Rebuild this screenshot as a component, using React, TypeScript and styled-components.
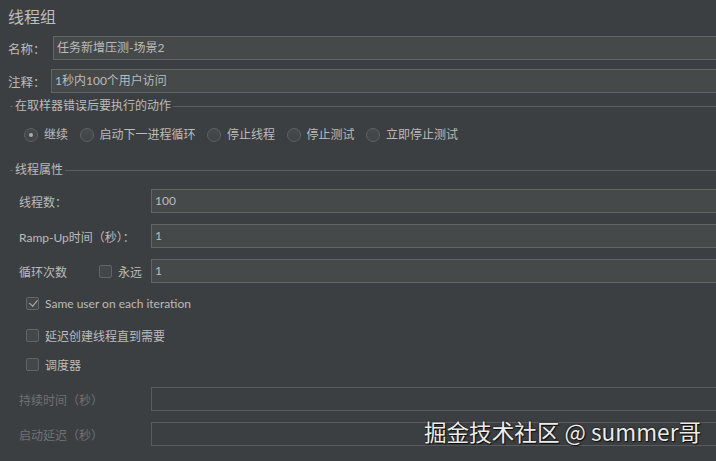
import React from 'react';
import styled, { createGlobalStyle } from 'styled-components';

const GlobalStyle = createGlobalStyle`
  html, body {
    margin: 0;
    padding: 0;
    background: #3c3f41;
    overflow: hidden;
  }
  body {
    width: 716px;
    height: 461px;
    font-family: Lato, "Noto Sans CJK SC", sans-serif;
    font-size: 12px;
    color: #bbbbbb;
  }
`;

const radios = ['继续', '启动下一进程循环', '停止线程', '停止测试', '立即停止测试'];

const App = () => {
  return (
    <>
      <GlobalStyle />
      <Page>
        <Title>线程组</Title>
        <TopRow>
          <TopLabel>名称：</TopLabel>
          <Field value="任务新增压测-场景2" />
        </TopRow>
        <TopRow $gap={9}>
          <TopLabel $width={43}>注释：</TopLabel>
          <Field value="1秒内100个用户访问" />
        </TopRow>

        <GroupHeader $top={5}>
          <Dash />
          <GroupTitle>在取样器错误后要执行的动作</GroupTitle>
          <Rule />
        </GroupHeader>
        <RadioRow>
          {radios.map((label, i) => (
            <RadioItem key={label}>
              <Radio $checked={i === 0} />
              <span>{label}</span>
            </RadioItem>
          ))}
        </RadioRow>

        <GroupHeader $top={19}>
          <Dash />
          <GroupTitle>线程属性</GroupTitle>
          <Rule />
        </GroupHeader>
        <PropRow $gap={11}>
          <PropLabel>线程数：</PropLabel>
          <Field value="100" />
        </PropRow>
        <PropRow $gap={11}>
          <PropLabel>Ramp-Up时间（秒）：</PropLabel>
          <Field value="1" />
        </PropRow>
        <PropRow $gap={11}>
          <PropLabel>
            <LoopLabel>循环次数</LoopLabel>
            <Box />
            <ForeverText>永远</ForeverText>
          </PropLabel>
          <Field value="1" />
        </PropRow>

        <CheckRow $gap={10}>
          <Box $checked />
          <span>Same user on each iteration</span>
        </CheckRow>
        <CheckRow $gap={12}>
          <Box />
          <span>延迟创建线程直到需要</span>
        </CheckRow>
        <CheckRow $gap={9}>
          <Box />
          <span>调度器</span>
        </CheckRow>

        <PropRow $gap={13}>
          <PropLabel $disabled>持续时间（秒）</PropLabel>
          <Field $disabled />
        </PropRow>
        <PropRow $gap={11}>
          <PropLabel $disabled>启动延迟（秒）</PropLabel>
          <Field $disabled />
        </PropRow>

        <Watermark>掘金技术社区 @ summer哥</Watermark>
      </Page>
    </>
  );
};

export default App;

const Field = ({ value, $disabled }: { value?: string; $disabled?: boolean }) => (
  <Input $disabled={$disabled}>{value}</Input>
);

const Page = styled.div`
  position: relative;
  width: 716px;
  height: 461px;
  overflow: hidden;
  display: flex;
  flex-direction: column;
`;

const Title = styled.div`
  height: 36px;
  padding: 6px 0 0 8px;
  box-sizing: border-box;
  font-size: 16px;
  line-height: 22px;
  color: #bdbdbd;
`;

const TopRow = styled.div<{ $gap?: number }>`
  display: flex;
  align-items: center;
  height: 24px;
  margin-top: ${(p) => p.$gap ?? 0}px;
  padding-left: 8px;
  margin-right: -6px;
`;

const TopLabel = styled.div<{ $width?: number }>`
  width: ${(p) => p.$width ?? 45}px;
  flex-shrink: 0;
  font-size: 12.5px;
`;

const Input = styled.div<{ $disabled?: boolean }>`
  flex: 1;
  height: 24px;
  box-sizing: border-box;
  border: 1px solid ${(p) => (p.$disabled ? '#595b5c' : '#646464')};
  background: ${(p) => (p.$disabled ? '#3c3f41' : '#45494a')};
  padding-left: 3px;
  line-height: 22px;
  font-size: 12px;
  color: #bbbbbb;
  white-space: nowrap;
`;

const GroupHeader = styled.div<{ $top: number }>`
  display: flex;
  align-items: center;
  height: 16px;
  margin-top: ${(p) => p.$top}px;
  padding-left: 10px;
`;

const Dash = styled.div`
  width: 3px;
  height: 1px;
  background: #5b5d5e;
`;

const GroupTitle = styled.span`
  padding: 0 2px;
  font-size: 12px;
  line-height: 16px;
`;

const Rule = styled.div`
  flex: 1;
  height: 1px;
  background: #5b5d5e;
`;

const RadioRow = styled.div`
  display: flex;
  align-items: center;
  gap: 11.5px;
  height: 16px;
  margin-top: 13px;
  padding-left: 24px;
`;

const RadioItem = styled.label`
  display: flex;
  align-items: center;
  gap: 6px;
  line-height: 16px;
`;

const Radio = styled.span<{ $checked?: boolean }>`
  position: relative;
  width: 14px;
  height: 14px;
  box-sizing: border-box;
  border-radius: 50%;
  border: 1px solid #5f6162;
  background: linear-gradient(#464a4c, #414446);

  &::after {
    content: '';
    display: ${(p) => (p.$checked ? 'block' : 'none')};
    position: absolute;
    left: 4px;
    top: 4px;
    width: 4px;
    height: 4px;
    border-radius: 50%;
    background: #a9abad;
  }
`;

const PropRow = styled.div<{ $gap: number }>`
  display: flex;
  align-items: center;
  height: 24px;
  margin-top: ${(p) => p.$gap}px;
  margin-right: -6px;
`;

const PropLabel = styled.div<{ $disabled?: boolean }>`
  display: flex;
  align-items: center;
  width: 151px;
  flex-shrink: 0;
  box-sizing: border-box;
  padding-left: 19px;
  font-size: 12px;
  color: ${(p) => (p.$disabled ? '#6f7173' : '#bbbbbb')};
`;

const LoopLabel = styled.span`
  width: 80px;
`;

const ForeverText = styled.span`
  margin-left: 6px;
`;

const Box = styled.span<{ $checked?: boolean }>`
  position: relative;
  display: inline-block;
  width: 13px;
  height: 13px;
  box-sizing: border-box;
  border: 1px solid #626465;
  border-radius: 2px;
  background: #43474a;
  flex-shrink: 0;

  &::after {
    content: '';
    display: ${(p) => (p.$checked ? 'block' : 'none')};
    position: absolute;
    left: 3.5px;
    top: 0.5px;
    width: 3.5px;
    height: 7px;
    border: solid #b4b6b8;
    border-width: 0 1.6px 1.6px 0;
    transform: rotate(40deg);
  }
`;

const CheckRow = styled.label<{ $gap: number }>`
  display: flex;
  align-items: center;
  gap: 6px;
  height: 20px;
  margin-top: ${(p) => p.$gap}px;
  padding-left: 26px;
  font-size: 12px;
`;

const Watermark = styled.div`
  position: absolute;
  right: 15px;
  bottom: 14px;
  font-family: "Noto Sans CJK SC", sans-serif;
  font-size: 22.6px;
  line-height: 30px;
  color: #ececec;
  text-shadow: 0 0 2px #000, 1px 1px 1px #111;
  white-space: nowrap;
`;
